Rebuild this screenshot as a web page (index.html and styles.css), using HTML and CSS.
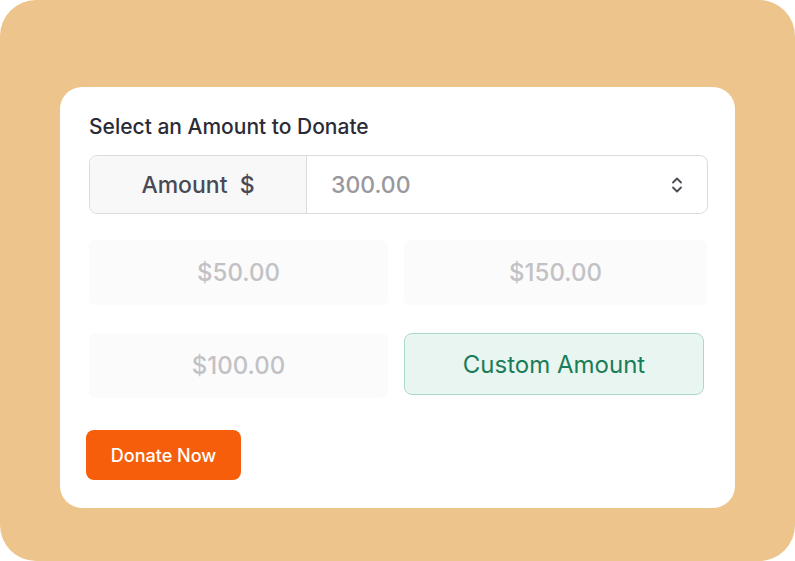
FILE: index.html
```html
<!DOCTYPE html>
<html>
<head>
    <meta charset="UTF-8">
    <title>Donate</title>
    <link rel="stylesheet" href="styles.css">
</head>
<body>
<div class="frame">
    <div class="card">
        <h2 class="title">Select an Amount to Donate</h2>
        <div class="amount-group">
            <div class="addon">Amount&nbsp; $</div>
            <div class="amount-field">
                <span class="amount-value">300.00</span>
                <svg class="spinner" width="14" height="18" viewBox="0 0 14 18" fill="none" stroke="#4b4b55" stroke-width="1.8" stroke-linecap="round" stroke-linejoin="round">
                    <path d="M3 6.5 L7 2.5 L11 6.5"/>
                    <path d="M3 11.5 L7 15.5 L11 11.5"/>
                </svg>
            </div>
        </div>
        <div class="options">
            <div class="option">$50.00</div>
            <div class="option">$150.00</div>
            <div class="option">$100.00</div>
            <div class="option option-custom">Custom Amount</div>
        </div>
        <button type="button" class="donate">Donate Now</button>
    </div>
</div>
</body>
</html>
```

FILE: styles.css
```css
body {
    margin: 0;
    background: #ffffff;
    font-family: Inter, "Noto Sans", sans-serif;
}
.frame {
    width: 795px;
    height: 561px;
    box-sizing: border-box;
    padding: 87px 60px 0 60px;
    background-color: #edc48c;
    border-radius: 36px;
}
.card {
    height: 421px;
    box-sizing: border-box;
    padding: 28px 27px 0 29px;
    background: #ffffff;
    border-radius: 22px;
}
.title {
    margin: 0;
    font-size: 21px;
    line-height: 24px;
    font-weight: 500;
    color: #2b2b37;
}
.amount-group {
    display: flex;
    height: 59px;
    margin-top: 16px;
    box-sizing: border-box;
    border: 1px solid #dcdce0;
    border-radius: 8px;
    overflow: hidden;
}
.addon {
    width: 216px;
    display: flex;
    align-items: center;
    justify-content: center;
    background: #f8f8f9;
    border-right: 1px solid #dcdce0;
    font-size: 23px;
    font-weight: 500;
    color: #4a4a55;
}
.amount-field {
    flex: 1;
    display: flex;
    align-items: center;
    justify-content: space-between;
    padding: 0 23px 0 24px;
}
.amount-value {
    font-size: 23px;
    font-weight: 500;
    color: #98989e;
}
.options {
    display: grid;
    grid-template-columns: 299px 303px;
    grid-template-rows: 65px 65px;
    column-gap: 16px;
    row-gap: 28px;
    margin-top: 26px;
}
.option {
    display: flex;
    align-items: center;
    justify-content: center;
    background: #fbfbfb;
    border-radius: 6px;
    font-size: 24px;
    font-weight: 500;
    color: #c2c2c6;
}
.option-custom {
    width: 300px;
    height: 62px;
    box-sizing: border-box;
    background: #e8f5f0;
    border: 1.5px solid #a9d9c6;
    border-radius: 8px;
    color: #1b7c58;
    font-weight: 400;
}
.donate {
    display: block;
    width: 155px;
    height: 50px;
    margin: 32px 0 0 -3px;
    border: none;
    border-radius: 8px;
    background: #f65e0b;
    color: #ffffff;
    font-family: Inter, "Noto Sans", sans-serif;
    font-size: 18px;
    font-weight: 500;
}
```
